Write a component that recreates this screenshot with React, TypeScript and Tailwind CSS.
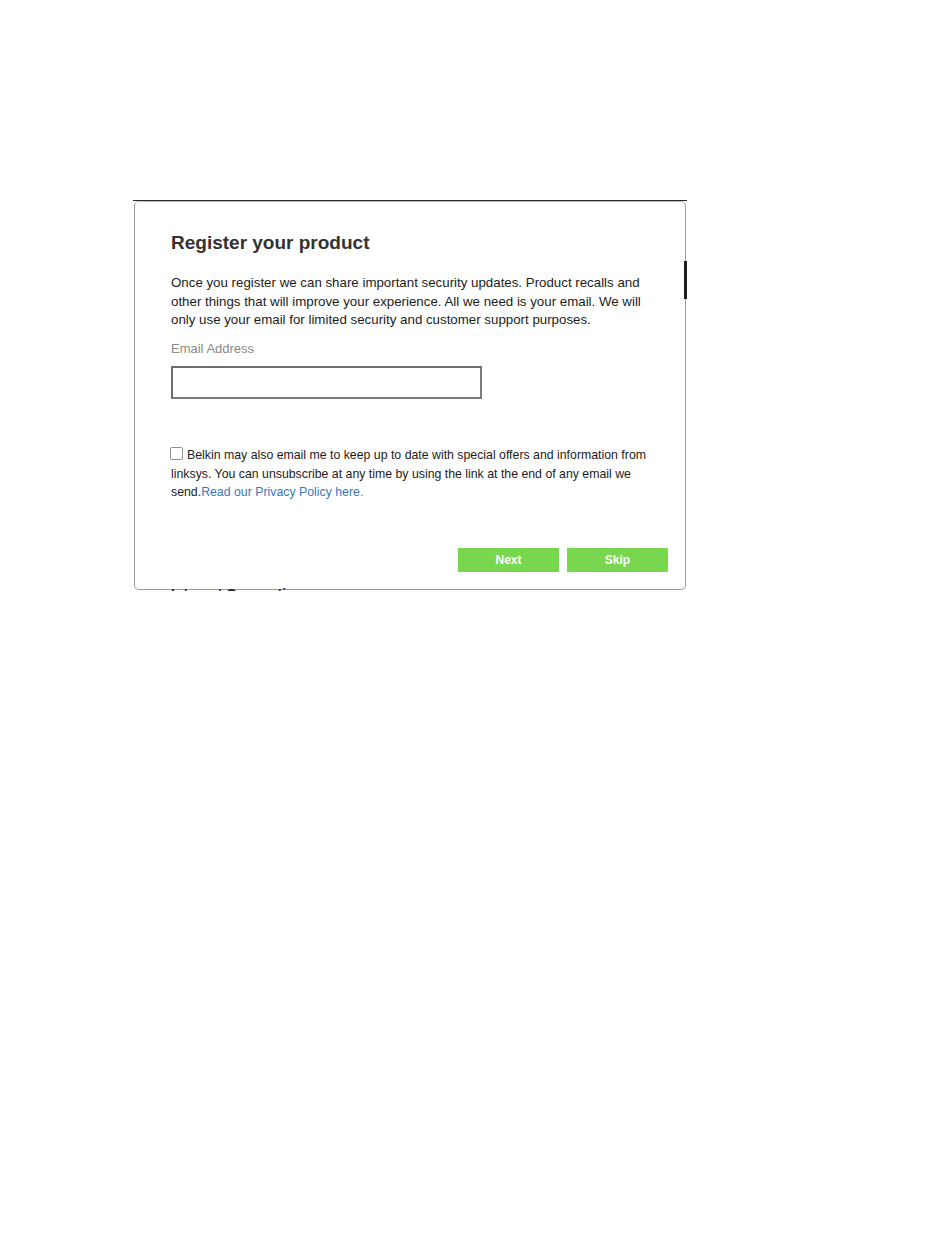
import React from "react";

export default function App() {
  return (
    <div className="w-[950px] h-[1260px] bg-white" style={{ fontFamily: '"Liberation Sans", Arial, sans-serif' }}>
      <div className="pt-[200px] pl-[133px]">
        <div className="relative w-[554px] h-[391px] overflow-hidden border-t border-[#2a2a2a]">
          <div className="h-[389px] ml-[1px] w-[552px] bg-white border border-[#9a9a9a] border-t-[#bdbdbd] rounded-[5px] flex flex-col">
            <div className="pt-[30px] pl-[36px] pr-[36px]">
              <h1 className="text-[19px] leading-[22px] font-bold text-[#333] mb-[20px]">Register your product</h1>
              <p className="text-[13.3px] leading-[18.57px] text-[#1c1c1c] mb-[10px]">
                Once you register we can share important security updates. Product recalls and other things that will improve your experience. All we need is your email. We will only use your email for limited security and customer support purposes.
              </p>
              <div className="text-[13px] leading-[18.57px] text-[#8a8a8a] mb-[8px]">Email Address</div>
              <div className="w-[311px] h-[33px] border-2 border-[#6e6e6e] border-r-[#7d7d7d] border-b-[#7d7d7d] bg-white" />
              <p className="mt-[47px] text-[12.32px] leading-[18.57px] text-[#1c1c1c]">
                <span className="inline-block w-[13px] h-[13px] border border-[#8f8f8f] rounded-[2px] bg-white align-[-1px] ml-[-1px] mr-[4px]" />
                Belkin may also email me to keep up to date with special offers and information from linksys. You can unsubscribe at any time by using the link at the end of any email we send.<span className="text-[#3a78b8]">Read our Privacy Policy here.</span>
              </p>
            </div>
            <div className="mt-[46px] pr-[17px] flex justify-end gap-[8px]">
              <div className="w-[101px] h-[24px] bg-[#78d64f] text-white text-[12px] font-bold flex items-center justify-center">Next</div>
              <div className="w-[101px] h-[24px] bg-[#78d64f] text-white text-[12px] font-bold flex items-center justify-center">Skip</div>
            </div>
          </div>
          <div className="absolute right-0 top-[60px] w-[3px] h-[38px] bg-[#1e1e1e]" />
          <div className="absolute left-[38px] top-[385px] h-[5px] overflow-hidden">
            <div className="text-[14px] leading-[16px] font-bold text-[#222] whitespace-nowrap">Internet Connection</div>
          </div>
        </div>
      </div>
    </div>
  );
}
